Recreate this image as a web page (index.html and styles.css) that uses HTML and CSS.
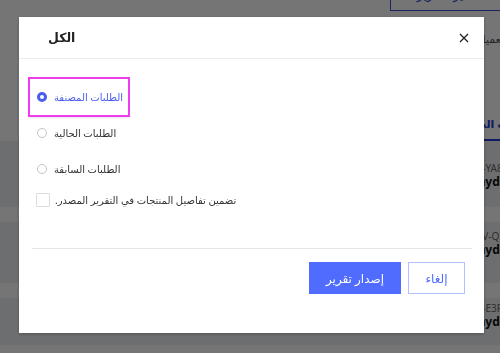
FILE: index.html
```html
<!DOCTYPE html>
<html lang="ar">
<head>
    <meta charset="UTF-8">
    <meta name="viewport" content="width=device-width, initial-scale=1.0">
    <title>الطلبات</title>
    <link rel="stylesheet" href="styles.css">
</head>
<body>
    <div class="app">
        <div class="app-top">
            <button class="export-btn" dir="rtl">تصدير التقرير</button>
        </div>
        <div class="search-bar">
            <div class="search-input" dir="rtl">ابحث باسم العميل</div>
        </div>
        <div class="tabs">
            <div class="tab" dir="rtl">الطلبات الحالية</div>
        </div>
        <div class="order-list">
            <div class="order-row">
                <div></div>
                <div class="order-info">
                    <div class="order-id">ORD-YA81K</div>
                    <div class="order-name">Haydar</div>
                </div>
            </div>
            <div class="order-row">
                <div></div>
                <div class="order-info">
                    <div class="order-id">ORDV-Q27</div>
                    <div class="order-name">Haydar</div>
                </div>
            </div>
            <div class="order-row">
                <div></div>
                <div class="order-info">
                    <div class="order-id">ORD-E3P</div>
                    <div class="order-name">Haydar</div>
                </div>
            </div>
        </div>
    </div>

    <div class="backdrop">
        <div class="modal">
            <div class="modal-header">
                <h2 class="modal-title" dir="rtl">الكل</h2>
                <button class="close-btn" aria-label="close">
                    <svg width="10" height="10" viewBox="0 0 10 10">
                        <path d="M1 1 L9 9 M9 1 L1 9" stroke="#222" stroke-width="1.3" fill="none"/>
                    </svg>
                </button>
            </div>

            <div class="modal-body">
                <label class="option is-focused is-checked">
                    <span class="radio"></span>
                    <span class="option-text" dir="rtl">الطلبات المصنفة</span>
                </label>
                <label class="option">
                    <span class="radio"></span>
                    <span class="option-text" dir="rtl">الطلبات الحالية</span>
                </label>
                <label class="option">
                    <span class="radio"></span>
                    <span class="option-text" dir="rtl">الطلبات السابقة</span>
                </label>
                <label class="check">
                    <span class="check-box"></span>
                    <span class="option-text" dir="rtl">تضمين تفاصيل المنتجات في التقرير المصدر.</span>
                </label>
            </div>

            <div class="modal-divider"></div>

            <div class="modal-footer">
                <button class="btn btn-primary" dir="rtl">إصدار تقرير</button>
                <button class="btn btn-outline" dir="rtl">إلغاء</button>
            </div>
        </div>
    </div>
</body>
</html>
```

FILE: styles.css
```css
body {
    margin: 0;
    font-family: "Noto Sans", "DejaVu Sans", sans-serif;
    background-color: #fff;
    overflow: hidden;
    width: 500px;
    height: 353px;
}
button {
    font-family: inherit;
    cursor: pointer;
}

/* page behind the dialog */
.app {
    height: 353px;
    overflow: hidden;
}
.app-top {
    height: 11px;
    display: flex;
    justify-content: flex-end;
}
.export-btn {
    width: 120px;
    height: 33px;
    margin-top: -22px;
    margin-right: -10px;
    background: #fff;
    border: 1px solid #3b4fd0;
    color: #3b4fd0;
    font-size: 12px;
}
.search-bar {
    height: 99px;
    display: flex;
    justify-content: flex-end;
}
.search-input {
    margin-top: 20px;
    margin-right: -60px;
    height: 16px;
    font-size: 11px;
    color: #555;
    white-space: nowrap;
}
.tabs {
    height: 31px;
    display: flex;
    justify-content: flex-end;
    margin-right: -40px;
}
.tab {
    padding: 6px 0 0;
    font-size: 11px;
    font-weight: bold;
    color: #2438d6;
    border-bottom: 2px solid #2438d6;
    box-sizing: border-box;
    white-space: nowrap;
}
.order-list {
    display: flex;
    flex-direction: column;
    gap: 15px;
}
.order-row {
    display: grid;
    grid-template-columns: 470px 1fr;
    background-color: #eeeff1;
    height: 66px;
}
.order-row:nth-child(2) {
    height: 61px;
}
.order-row:nth-child(3) {
    height: 47px;
}
.order-info {
    padding-top: 21px;
    white-space: nowrap;
}
.order-row:nth-child(2) .order-info {
    padding-top: 8px;
}
.order-row:nth-child(3) .order-info {
    padding-top: 4px;
}
.order-id {
    font-size: 10px;
    line-height: 12px;
    color: #666;
    margin-left: -9px;
    margin-bottom: 1px;
}
.order-name {
    font-size: 12px;
    line-height: 14px;
    font-weight: bold;
    color: #111;
    margin-left: -1px;
}

/* dialog */
.backdrop {
    position: fixed;
    inset: 0;
    background-color: rgba(0, 0, 0, 0.54);
    display: flex;
    align-items: flex-start;
    padding: 17px 0 0 19px;
}
.modal {
    width: 465px;
    height: 316px;
    background-color: #fff;
    box-shadow: 0 1px 3px rgba(0, 0, 0, 0.25);
}
.modal-header {
    height: 41px;
    border-bottom: 1px solid #ebebeb;
    display: flex;
    align-items: center;
    justify-content: space-between;
    padding: 0 13px 0 29px;
}
.modal-title {
    margin: 0;
    font-size: 12.5px;
    font-weight: bold;
    color: #222;
}
.close-btn {
    width: 14px;
    height: 14px;
    padding: 0;
    border: none;
    background: none;
    display: flex;
    align-items: center;
    justify-content: center;
}
.modal-body {
    display: flex;
    flex-direction: column;
    align-items: flex-start;
    padding: 20px 12px 35px 11px;
}
.option {
    display: flex;
    align-items: center;
    gap: 7px;
    height: 36px;
    padding: 0 7px;
    box-sizing: border-box;
    font-size: 10px;
    color: #333;
    white-space: nowrap;
}
.option.is-focused {
    width: 98px;
    outline: 2px solid #f03cf0;
    box-shadow: 0 2px 3px rgba(0, 0, 0, 0.2);
}
.option.is-checked {
    color: #4a5cf0;
}
.radio {
    width: 10px;
    height: 10px;
    border: 1px solid #c4c4c4;
    border-radius: 50%;
    box-sizing: border-box;
    flex-shrink: 0;
}
.is-checked .radio {
    border: 3px solid #4a5cf0;
}
.check {
    display: flex;
    align-items: center;
    gap: 5px;
    height: 26px;
    padding-left: 6px;
    font-size: 10px;
    color: #333;
    white-space: nowrap;
}
.check-box {
    width: 14px;
    height: 14px;
    border: 1px solid #dcdcdc;
    box-sizing: border-box;
    border-radius: 1px;
}
.modal-divider {
    margin: 0 12px 0 13px;
    border-top: 1px solid #e6e6e6;
}
.modal-footer {
    display: flex;
    justify-content: flex-end;
    gap: 7px;
    padding: 13px 19px 0;
}
.btn {
    height: 32px;
    font-size: 12px;
    padding: 0;
}
.btn-primary {
    width: 92px;
    background-color: #4f6cfe;
    border: 1px solid #4f6cfe;
    color: #fff;
}
.btn-outline {
    width: 57px;
    background-color: #fff;
    border: 1px solid #b3c0ff;
    color: #4f6cfe;
}
```
